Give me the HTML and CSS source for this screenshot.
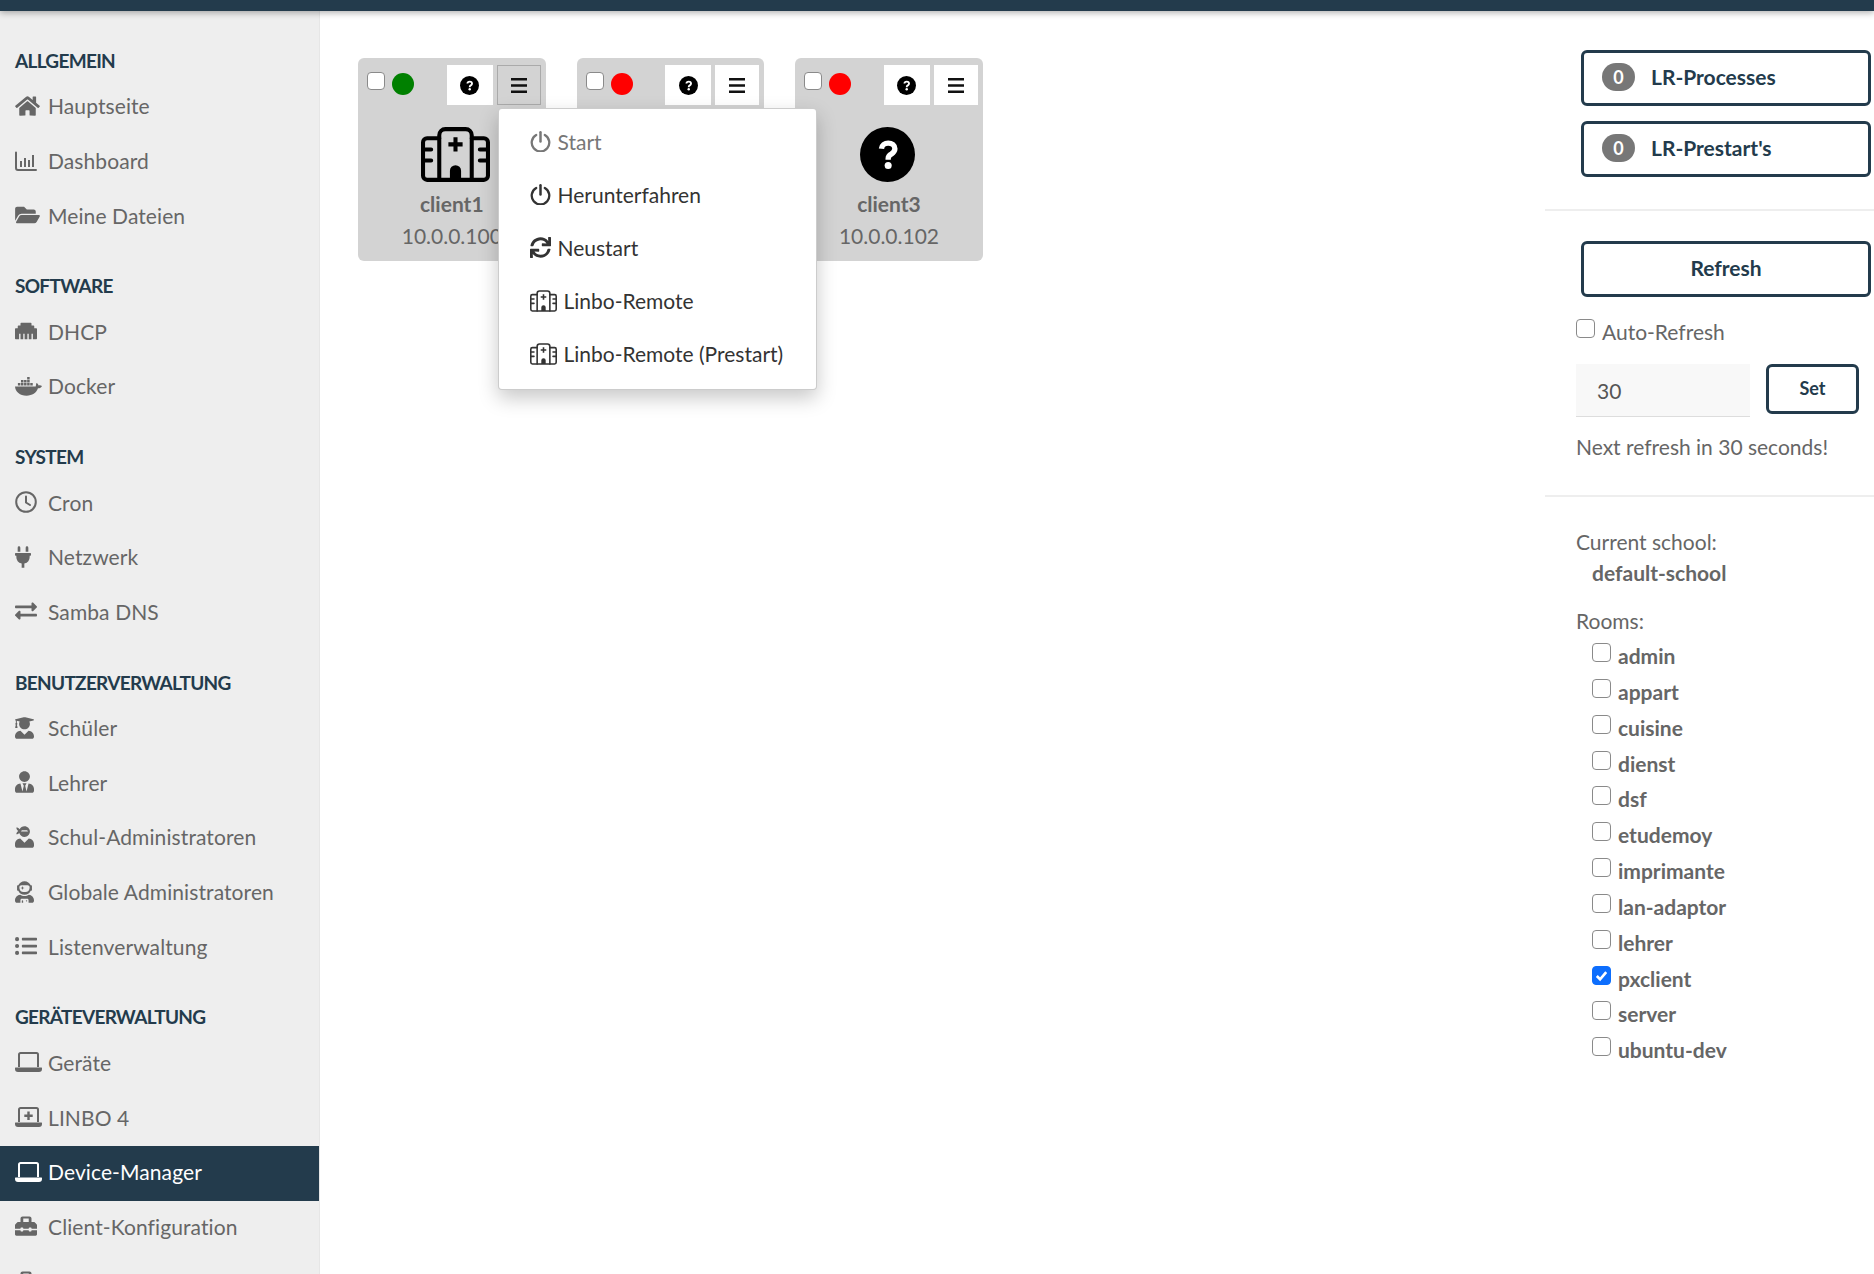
FILE: index.html
```html
<!DOCTYPE html>
<html lang="de">

<head>
    <meta charset="UTF-8">
    <meta name="viewport" content="width=device-width, initial-scale=1.0">
    <title>Device-Manager</title>
    <link rel="stylesheet" href="styles.css">
</head>

<body>
    <!-- icon sprite -->
    <svg class="sprite" xmlns="http://www.w3.org/2000/svg">
        <symbol id="i-home" viewBox="0 0 576 512"><path d="M280.37 148.26L96 300.11V464a16 16 0 0 0 16 16l112.06-.29a16 16 0 0 0 15.92-16V368a16 16 0 0 1 16-16h64a16 16 0 0 1 16 16v95.64a16 16 0 0 0 16 16.05L464 480a16 16 0 0 0 16-16V300L295.67 148.26a12.19 12.19 0 0 0-15.3 0zM571.6 251.47L488 182.56V44.05a12 12 0 0 0-12-12h-56a12 12 0 0 0-12 12v72.61L318.47 43a48 48 0 0 0-61 0L4.34 251.47a12 12 0 0 0-1.6 16.9l25.5 31A12 12 0 0 0 45.15 301l235.22-193.74a12.19 12.19 0 0 1 15.3 0L530.9 301a12 12 0 0 0 16.9-1.6l25.5-31a12 12 0 0 0-1.7-16.93z"/></symbol>
        <symbol id="i-chart" viewBox="0 0 22 20"><path d="M0 1.5a1 1 0 0 1 2 0V17a1 1 0 0 0 1 1h18a1 1 0 0 1 0 2H3a3 3 0 0 1-3-3zM5 10h2v6H5zM9 7h2v9H9zM13 9h2v7h-2zM17 4h2v12h-2z"/></symbol>
        <symbol id="i-folder" viewBox="0 0 576 512"><path d="M572.694 292.093L500.27 416.248A63.997 63.997 0 0 1 444.989 448H45.025c-18.523 0-30.064-20.093-20.731-36.093l72.424-124.155A64 64 0 0 1 152 256h399.964c18.523 0 30.064 20.093 20.73 36.093zM152 224h328v-48c0-26.51-21.49-48-48-48H272l-64-64H48C21.49 64 0 85.49 0 112v278.046l69.077-118.418C86.214 242.25 117.989 224 152 224z"/></symbol>
        <symbol id="i-ethernet" viewBox="0 0 512 512"><path d="M496 192h-48v-48c0-8.8-7.2-16-16-16h-48V80c0-8.8-7.2-16-16-16H144c-8.8 0-16 7.2-16 16v48H80c-8.8 0-16 7.2-16 16v48H16c-8.8 0-16 7.2-16 16v224c0 8.8 7.2 16 16 16h80V320h32v128h64V320h32v128h64V320h32v128h64V320h32v128h80c8.8 0 16-7.2 16-16V208c0-8.8-7.2-16-16-16z"/></symbol>
        <symbol id="i-docker" viewBox="0 0 28 20"><path d="M0 10.5h21.5c.4-1.400.2-3 1-3.600 1 .5 1.700 1.500 1.900 2.500 1.200-.4 2.400-.2 3.600.5-.8 1.800-2.300 2.600-4.200 2.500C22 17.500 18 20 12 20 5 20 .4 16 0 10.500z"/><path d="M3 7h2.600v2.600H3zM6.200 7h2.600v2.600H6.200zM9.400 7H12v2.600H9.400zM12.600 7h2.600v2.600h-2.600zM15.800 7h2.600v2.600h-2.600zM6.200 3.800h2.600v2.600H6.200zM9.400 3.800H12v2.600H9.400zM12.600 3.800h2.600v2.600h-2.600zM12.600.6h2.600v2.600h-2.600z"/></symbol>
        <symbol id="i-clock" viewBox="0 0 22 22"><circle cx="11" cy="11" r="9.800" fill="none" stroke="currentColor" stroke-width="2"/><path d="M11 5.500V11.500l4 2.500" fill="none" stroke="currentColor" stroke-width="2" stroke-linecap="round"/></symbol>
        <symbol id="i-plug" viewBox="0 0 384 512"><path d="M320,32a32,32,0,0,0-64,0v96h64Zm48,128H16A16,16,0,0,0,0,176v32a16,16,0,0,0,16,16H32v32A160.07,160.07,0,0,0,160,412.8V512h64V412.8A160.07,160.07,0,0,0,352,256V224h16a16,16,0,0,0,16-16V176A16,16,0,0,0,368,160ZM128,32a32,32,0,0,0-64,0v96h64Z"/></symbol>
        <symbol id="i-exchange" viewBox="0 0 512 512"><path d="M0 168v-16c0-13.255 10.745-24 24-24h360V80c0-21.367 25.899-32.042 40.971-16.971l80 80c9.372 9.373 9.372 24.569 0 33.941l-80 80C409.956 271.982 384 261.456 384 240v-48H24c-13.255 0-24-10.745-24-24zm488 152H128v-48c0-21.314-25.862-32.08-40.971-16.971l-80 80c-9.372 9.373-9.372 24.569 0 33.941l80 80C102.057 463.997 128 453.437 128 432v-48h360c13.255 0 24-10.745 24-24v-16c0-13.255-10.745-24-24-24z"/></symbol>
        <symbol id="i-graduate" viewBox="0 0 448 512"><path d="M319.4 320.6L224 416l-95.4-95.4C57.1 323.7 0 382.2 0 454.4v9.6c0 26.5 21.5 48 48 48h352c26.5 0 48-21.5 48-48v-9.6c0-72.2-57.1-130.7-128.6-133.8zM13.6 79.8l6.4 1.5v58.4c-7 4.2-12 11.5-12 20.3 0 8.4 4.6 15.4 11.1 19.700L3.500 242c-1.700 6.900 2.100 14 7.600 14h41.800c5.500 0 9.300-7.100 7.600-14l-15.600-62.300C51.400 175.400 56 168.400 56 160c0-8.800-5-16.100-12-20.300V87.100l66 15.900c-8.600 17.200-14 36.400-14 57 0 70.700 57.300 128 128 128s128-57.300 128-128c0-20.600-5.300-39.800-14-57l96.300-23.200c18.200-4.400 18.200-27.100 0-31.500l-190.400-46c-13-3.100-26.700-3.100-39.700 0L13.600 48.200c-18.100 4.400-18.100 27.200 0 31.600z"/></symbol>
        <symbol id="i-tie" viewBox="0 0 448 512"><path d="M224 256c70.700 0 128-57.300 128-128S294.700 0 224 0 96 57.300 96 128s57.300 128 128 128zm95.800 32.600L272 480l-32-136 32-56h-96l32 56-32 136-47.800-191.400C56.900 292 0 350.300 0 422.400V464c0 26.500 21.500 48 48 48h352c26.500 0 48-21.500 48-48v-41.600c0-72.100-56.900-130.400-128.200-133.800z"/></symbol>
        <symbol id="i-ninja" viewBox="0 0 448 512"><path d="M325.400 289.200L224 390.600 122.600 289.200C54 295.300 0 352.200 0 422.400V464c0 26.500 21.500 48 48 48h352c26.500 0 48-21.500 48-48v-41.600c0-70.200-54-127.100-122.600-133.200zM32 192c27.300 0 51.800-11.500 69.200-29.700 15.100 53.900 64 93.700 122.800 93.700 70.700 0 128-57.300 128-128S294.700 0 224 0c-50.400 0-93.600 29.400-114.500 71.800C92.100 47.800 64 32 32 32c0 33.400 17.100 62.800 43.100 80-26 17.200-43.100 46.600-43.100 80zm144-96h96c17.700 0 32 14.300 32 32H144c0-17.700 14.300-32 32-32z"/></symbol>
        <symbol id="i-astronaut" viewBox="0 0 448 512"><path d="M64 224h13.500c24.700 56.500 80.900 96 146.500 96s121.800-39.500 146.500-96H384c8.800 0 16-7.200 16-16v-96c0-8.800-7.200-16-16-16h-13.500C345.800 39.500 289.600 0 224 0S102.200 39.500 77.500 96H64c-8.800 0-16 7.200-16 16v96c0 8.800 7.200 16 16 16zm40-88c0-22.100 21.500-40 48-40h144c26.500 0 48 17.900 48 40v24c0 53-43 96-96 96h-48c-53 0-96-43-96-96v-24zm72 72l12-36 36-12-36-12-12-36-12 36-36 12 36 12 12 36zm151.600 113.400C297.700 340.700 262.200 352 224 352s-73.700-11.300-103.600-30.600C52.900 328.500 0 385 0 454.400v9.600c0 26.500 21.500 48 48 48h80v-64c0-17.700 14.300-32 32-32h128c17.700 0 32 14.300 32 32v64h80c26.500 0 48-21.500 48-48v-9.600c0-69.400-52.900-125.900-120.400-133zM272 448c-8.800 0-16 7.200-16 16s7.200 16 16 16 16-7.200 16-16-7.200-16-16-16zm-96 0c-8.800 0-16 7.200-16 16v48h32v-48c0-8.800-7.200-16-16-16z"/></symbol>
        <symbol id="i-list" viewBox="0 0 512 512"><path d="M48 48a48 48 0 1 0 48 48 48 48 0 0 0-48-48zm0 160a48 48 0 1 0 48 48 48 48 0 0 0-48-48zm0 160a48 48 0 1 0 48 48 48 48 0 0 0-48-48zm448 16H176a16 16 0 0 0-16 16v32a16 16 0 0 0 16 16h320a16 16 0 0 0 16-16v-32a16 16 0 0 0-16-16zm0-320H176a16 16 0 0 0-16 16v32a16 16 0 0 0 16 16h320a16 16 0 0 0 16-16V80a16 16 0 0 0-16-16zm0 160H176a16 16 0 0 0-16 16v32a16 16 0 0 0 16 16h320a16 16 0 0 0 16-16v-32a16 16 0 0 0-16-16z"/></symbol>
        <symbol id="i-laptop" viewBox="0 0 27 20"><path d="M4 15V2.500A1.500 1.500 0 0 1 5.500 1h16A1.500 1.500 0 0 1 23 2.500V15" fill="none" stroke="currentColor" stroke-width="2"/><path d="M.5 15.500h26a.5.5 0 0 1 .5.500v1a3 3 0 0 1-3 3H3a3 3 0 0 1-3-3v-1a.5.5 0 0 1 .5-.500z"/></symbol>
        <symbol id="i-laptop-plus" viewBox="0 0 27 20"><path d="M4 15V2.500A1.500 1.500 0 0 1 5.500 1h16A1.500 1.500 0 0 1 23 2.500V15" fill="none" stroke="currentColor" stroke-width="2"/><path d="M.5 15.500h26a.5.5 0 0 1 .5.500v1a3 3 0 0 1-3 3H3a3 3 0 0 1-3-3v-1a.5.5 0 0 1 .5-.500zM12.300 4.500h2.400v3h3v2.400h-3v3h-2.400v-3h-3V7.500h3z"/></symbol>
        <symbol id="i-toolbox" viewBox="0 0 512 512"><path d="M502.630 214.630l-45.250-45.250c-6-6-14.140-9.370-22.630-9.370H384V80c0-26.510-21.490-48-48-48H176c-26.510 0-48 21.490-48 48v80H77.250c-8.490 0-16.620 3.370-22.630 9.370L9.370 214.630c-6 6-9.370 14.140-9.370 22.630V320h128v-16c0-8.840 7.160-16 16-16h32c8.840 0 16 7.160 16 16v16h128v-16c0-8.840 7.160-16 16-16h32c8.840 0 16 7.160 16 16v16h128v-82.750c0-8.480-3.370-16.620-9.370-22.620zM320 160H192V80h128v80zm64 208c0 8.840-7.160 16-16 16h-32c-8.840 0-16-7.160-16-16v-16H192v16c0 8.840-7.160 16-16 16h-32c-8.840 0-16-7.160-16-16v-16H0v96c0 17.670 14.330 32 32 32h448c17.670 0 32-14.330 32-32v-96H384v16z"/></symbol>
        <symbol id="i-question" viewBox="0 0 164 164"><circle cx="82" cy="82" r="82" fill="#000"/><path d="M64 65c1-11 10-17 20-17 11 0 20 7 20 17 0 8-5 12-11 16-6 3-9 7-9 14v3" fill="none" stroke="#fff" stroke-width="16"/><circle cx="84" cy="115" r="10.500" fill="#fff"/></symbol>
        <symbol id="i-bars" viewBox="0 0 16 15"><path d="M0 0h16v2.500H0zM0 6.200h16v2.500H0zM0 12.400h16v2.500H0z"/></symbol>
        <symbol id="i-power" viewBox="0 0 22 22"><path d="M6.500 4.200a9.200 9.200 0 1 0 9 0" fill="none" stroke="currentColor" stroke-width="2.400" stroke-linecap="round"/><path d="M11 1.300V11" fill="none" stroke="currentColor" stroke-width="2.600" stroke-linecap="round"/></symbol>
        <symbol id="i-sync" viewBox="0 0 512 512"><path d="M440.650 12.570l4 82.770A247.160 247.160 0 0 0 255.830 8C134.730 8 33.910 94.920 12.290 209.820A12 12 0 0 0 24.090 224h49.050a12 12 0 0 0 11.670-9.260 175.910 175.910 0 0 1 317-56.940l-101.460-4.860a12 12 0 0 0-12.570 12v47.410a12 12 0 0 0 12 12H500a12 12 0 0 0 12-12V12a12 12 0 0 0-12-12h-47.370a12 12 0 0 0-11.980 12.570zM255.830 432a175.610 175.610 0 0 1-146-77.800l101.800 4.870a12 12 0 0 0 12.570-12v-47.400a12 12 0 0 0-12-12H12a12 12 0 0 0-12 12V500a12 12 0 0 0 12 12h47.350a12 12 0 0 0 12-12.600l-4.150-82.570A247.170 247.170 0 0 0 255.830 504c121.110 0 221.930-86.920 243.550-201.820a12 12 0 0 0-11.800-14.180h-49.050a12 12 0 0 0-11.670 9.260A175.860 175.860 0 0 1 255.830 432z"/></symbol>
        <symbol id="i-hospital" viewBox="0 0 68 54"><g fill="none" stroke="currentColor" stroke-width="4" stroke-linejoin="round" stroke-linecap="round"><path d="M18 11H6a4 4 0 0 0-4 4v33a4 4 0 0 0 4 4h56a4 4 0 0 0 4-4V15a4 4 0 0 0-4-4H50"/><path d="M18 52V8a6 6 0 0 1 6-6h20a6 6 0 0 1 6 6v44"/><path d="M3 22h7M3 33h7M58 22h7M58 33h7"/></g><path d="M32 10h4v5h5v4h-5v5h-4v-5h-5v-4h5zM28.500 52V43a5.500 5.500 0 0 1 11 0v9z"/></symbol>
    </svg>

    <header class="topbar"></header>

    <div class="page">
        <nav class="sidebar">
            <h4 class="nav-title">Allgemein</h4>
            <a class="nav-item"><span class="nav-icon"><svg class="ico w24"><use href="#i-home"/></svg></span>Hauptseite</a>
            <a class="nav-item"><span class="nav-icon"><svg class="ico w22"><use href="#i-chart"/></svg></span>Dashboard</a>
            <a class="nav-item"><span class="nav-icon"><svg class="ico w24"><use href="#i-folder"/></svg></span>Meine Dateien</a>

            <h4 class="nav-title">Software</h4>
            <a class="nav-item"><span class="nav-icon"><svg class="ico w22"><use href="#i-ethernet"/></svg></span>DHCP</a>
            <a class="nav-item"><span class="nav-icon"><svg class="ico w27"><use href="#i-docker"/></svg></span>Docker</a>

            <h4 class="nav-title">System</h4>
            <a class="nav-item"><span class="nav-icon"><svg class="ico w22"><use href="#i-clock"/></svg></span>Cron</a>
            <a class="nav-item"><span class="nav-icon"><svg class="ico w16"><use href="#i-plug"/></svg></span>Netzwerk</a>
            <a class="nav-item"><span class="nav-icon"><svg class="ico w22"><use href="#i-exchange"/></svg></span>Samba DNS</a>

            <h4 class="nav-title">Benutzerverwaltung</h4>
            <a class="nav-item"><span class="nav-icon"><svg class="ico w19"><use href="#i-graduate"/></svg></span>Schüler</a>
            <a class="nav-item"><span class="nav-icon"><svg class="ico w19"><use href="#i-tie"/></svg></span>Lehrer</a>
            <a class="nav-item"><span class="nav-icon"><svg class="ico w19"><use href="#i-ninja"/></svg></span>Schul-Administratoren</a>
            <a class="nav-item"><span class="nav-icon"><svg class="ico w19"><use href="#i-astronaut"/></svg></span>Globale Administratoren</a>
            <a class="nav-item"><span class="nav-icon"><svg class="ico w22"><use href="#i-list"/></svg></span>Listenverwaltung</a>

            <h4 class="nav-title">Geräteverwaltung</h4>
            <a class="nav-item"><span class="nav-icon"><svg class="ico w27"><use href="#i-laptop"/></svg></span>Geräte</a>
            <a class="nav-item"><span class="nav-icon"><svg class="ico w27"><use href="#i-laptop-plus"/></svg></span>LINBO 4</a>
            <a class="nav-item active"><span class="nav-icon"><svg class="ico w27"><use href="#i-laptop"/></svg></span>Device-Manager</a>
            <a class="nav-item"><span class="nav-icon"><svg class="ico w22"><use href="#i-toolbox"/></svg></span>Client-Konfiguration</a>
            <a class="nav-item"><span class="nav-icon"><svg class="ico w22"><use href="#i-toolbox"/></svg></span>Linbo-Synchronisation</a>
        </nav>

        <main class="content">
            <div class="card">
                <div class="card-head">
                    <input type="checkbox" class="check">
                    <span class="dot green"></span>
                    <button class="tool tool-wide"><svg class="ico-q"><use href="#i-question"/></svg></button>
                    <button class="tool open"><svg class="ico-bars"><use href="#i-bars"/></svg></button>
                </div>
                <svg class="card-icon card-icon-hospital"><use href="#i-hospital"/></svg>
                <div class="card-name">client1</div>
                <div class="card-ip">10.0.0.100</div>

                <div class="menu">
                    <a class="menu-item disabled"><svg class="ico-power"><use href="#i-power"/></svg>Start</a>
                    <a class="menu-item"><svg class="ico-power"><use href="#i-power"/></svg>Herunterfahren</a>
                    <a class="menu-item"><svg class="ico-power"><use href="#i-sync"/></svg>Neustart</a>
                    <a class="menu-item"><svg class="ico-hosp"><use href="#i-hospital"/></svg>Linbo-Remote</a>
                    <a class="menu-item"><svg class="ico-hosp"><use href="#i-hospital"/></svg>Linbo-Remote (Prestart)</a>
                </div>
            </div>

            <div class="card">
                <div class="card-head">
                    <input type="checkbox" class="check">
                    <span class="dot red"></span>
                    <button class="tool tool-wide"><svg class="ico-q"><use href="#i-question"/></svg></button>
                    <button class="tool"><svg class="ico-bars"><use href="#i-bars"/></svg></button>
                </div>
                <svg class="card-icon"><use href="#i-question"/></svg>
                <div class="card-name">client2</div>
                <div class="card-ip">10.0.0.101</div>
            </div>

            <div class="card">
                <div class="card-head">
                    <input type="checkbox" class="check">
                    <span class="dot red"></span>
                    <button class="tool tool-wide"><svg class="ico-q"><use href="#i-question"/></svg></button>
                    <button class="tool"><svg class="ico-bars"><use href="#i-bars"/></svg></button>
                </div>
                <svg class="card-icon"><use href="#i-question"/></svg>
                <div class="card-name">client3</div>
                <div class="card-ip">10.0.0.102</div>
            </div>
        </main>

        <aside class="panel">
            <section class="panel-block block-status">
                <button class="btn btn-left"><span class="badge">0</span>LR-Processes</button>
                <button class="btn btn-left"><span class="badge">0</span>LR-Prestart's</button>
            </section>

            <section class="panel-block block-refresh">
                <button class="btn">Refresh</button>
                <label class="auto-refresh"><input type="checkbox" class="check">Auto-Refresh</label>
                <div class="refresh-row">
                    <input type="text" class="interval" value="30">
                    <button class="btn btn-small">Set</button>
                </div>
                <p class="next-refresh">Next refresh in 30 seconds!</p>
            </section>

            <section class="filters">
                <div class="filter-label">Current school:</div>
                <div class="school">default-school</div>
                <div class="filter-label rooms-label">Rooms:</div>
                <div class="rooms">
                    <label class="room"><input type="checkbox" class="check">admin</label>
                    <label class="room"><input type="checkbox" class="check">appart</label>
                    <label class="room"><input type="checkbox" class="check">cuisine</label>
                    <label class="room"><input type="checkbox" class="check">dienst</label>
                    <label class="room"><input type="checkbox" class="check">dsf</label>
                    <label class="room"><input type="checkbox" class="check">etudemoy</label>
                    <label class="room"><input type="checkbox" class="check">imprimante</label>
                    <label class="room"><input type="checkbox" class="check">lan-adaptor</label>
                    <label class="room"><input type="checkbox" class="check">lehrer</label>
                    <label class="room"><input type="checkbox" class="check" checked>pxclient</label>
                    <label class="room"><input type="checkbox" class="check">server</label>
                    <label class="room"><input type="checkbox" class="check">ubuntu-dev</label>
                </div>
            </section>
        </aside>
    </div>
</body>

</html>
```

FILE: styles.css
```css
* {
    box-sizing: border-box;
}

html,
body {
    margin: 0;
    height: 1274px;
    overflow: hidden;
}

body {
    display: flex;
    flex-direction: column;
    background: #fff;
    color: #666;
    font-family: "Lato", "Open Sans", sans-serif;
    font-size: 21px;
}

.sprite {
    display: none;
}

.topbar {
    flex: none;
    height: 11px;
    background: #233b4c;
    box-shadow: 0 2px 6px rgba(0, 0, 0, .3);
    position: relative;
    z-index: 2;
}

.page {
    flex: 1;
    display: flex;
    min-height: 0;
}

/* sidebar */
.sidebar {
    flex: none;
    width: 320px;
    padding-top: 7.6px;
    background: #eee;
    border-right: 1px solid #e6e6e6;
    overflow: hidden;
}

.nav-title {
    height: 38px;
    margin: 23.4px 0 0;
    padding-left: 15px;
    line-height: 38px;
    color: #233b4c;
    font-size: 19px;
    font-weight: 700;
    letter-spacing: -.7px;
    text-transform: uppercase;
}

.nav-item {
    display: flex;
    align-items: center;
    height: 54.7px;
    padding: 0 0 3px 15px;
    color: #666;
    letter-spacing: .1px;
    white-space: nowrap;
}

.nav-item.active {
    background: #233b4c;
    color: #fff;
}

.nav-icon {
    flex: none;
    display: flex;
    align-items: center;
    width: 33px;
}

.ico {
    display: block;
    height: 22px;
    fill: currentColor;
}

.w16 { width: 16px; }
.w19 { width: 19px; }
.w22 { width: 22px; }
.w24 { width: 25px; }
.w27 { width: 27px; }

/* device cards */
.content {
    flex: 1;
    display: flex;
    align-items: flex-start;
    gap: 31px;
    padding: 47px 0 0 38px;
}

.card {
    position: relative;
    flex: none;
    width: 187.6px;
    height: 203px;
    padding: 7px 5px 0 9px;
    background: #d3d3d3;
    border-radius: 6px;
    text-align: center;
}

.card-head {
    display: flex;
    align-items: flex-start;
    height: 62px;
}

.check {
    flex: none;
    width: 18px;
    height: 18px;
    margin: 7px 0 0;
    appearance: none;
    background: #fff;
    border: 1px solid #8a8a8a;
    border-radius: 4px;
}

.check:checked {
    background: #0d6efd url("data:image/svg+xml,%3Csvg xmlns='http://www.w3.org/2000/svg' viewBox='0 0 18 18'%3E%3Cpath d='M4 9.500l3.500 3.500L14 5.500' fill='none' stroke='%23fff' stroke-width='2.800'/%3E%3C/svg%3E") center / 100% no-repeat;
    border-color: #0d6efd;
}

.dot {
    flex: none;
    width: 22px;
    height: 22px;
    margin: 8px 0 0 7px;
    border-radius: 50%;
}

.dot.green { background: #008000; }
.dot.red { background: #f00; }

.tool {
    flex: none;
    display: flex;
    align-items: center;
    justify-content: center;
    width: 44px;
    height: 40px;
    margin-left: 4px;
    padding: 0;
    background: #fff;
    border: 1px solid #fff;
}

.tool-wide {
    width: 46px;
    margin-left: auto;
}

.tool.open {
    background: #d3d3d3;
    border-color: #aaa;
}

.ico-q {
    width: 19px;
    height: 19px;
}

.ico-bars {
    width: 16px;
    height: 15px;
    fill: #111;
}

.card-icon {
    display: block;
    width: 55px;
    height: 55px;
    margin: 0 auto;
    position: relative;
    left: -3px;
    color: #000;
    fill: #000;
}

.card-icon-hospital {
    width: 69px;
    left: 1.5px;
}

.card-name {
    margin-top: 6px;
    height: 32px;
    line-height: 31px;
    font-weight: 700;
    position: relative;
    left: -2px;
}

.card-ip {
    height: 32px;
    line-height: 32px;
    position: relative;
    left: -2px;
}

/* dropdown */
.menu {
    position: absolute;
    z-index: 3;
    top: 50px;
    left: 139.5px;
    width: 319px;
    height: 282px;
    padding: 6px 0 0 31px;
    background: #fff;
    border: 1px solid rgba(0, 0, 0, .2);
    border-radius: 4px;
    box-shadow: 0 8px 20px rgba(0, 0, 0, .22);
    text-align: left;
}

.menu-item {
    display: flex;
    align-items: center;
    height: 53px;
    color: #333;
    white-space: nowrap;
}

.menu-item.disabled {
    color: #777;
}

.ico-power {
    flex: none;
    width: 21px;
    height: 21px;
    margin-right: 7px;
    fill: currentColor;
}

.ico-hosp {
    flex: none;
    width: 27px;
    height: 22px;
    margin-right: 7px;
    fill: currentColor;
}

/* right panel */
.panel {
    flex: none;
    width: 329px;
}

.panel-block {
    border-bottom: 2px solid #eee;
}

.block-status {
    height: 200px;
    padding: 39px 3px 0 36px;
}

.block-refresh {
    height: 286px;
    padding: 30px 3px 0 31px;
}

.btn {
    display: block;
    width: 100%;
    height: 56px;
    padding: 0 0 3px;
    background: #fff;
    border: 3px solid #233b4c;
    border-radius: 6px;
    color: #233b4c;
    font: 700 21px "Lato", sans-serif;
}

.block-refresh > .btn {
    width: 290px;
    margin-left: 5px;
}

.btn-left {
    display: flex;
    align-items: center;
    padding-left: 18px;
    margin-bottom: 15px;
}

.badge {
    width: 33px;
    height: 28px;
    margin-right: 16px;
    background: #777;
    border-radius: 14px;
    color: #fff;
    font-size: 18px;
    line-height: 28px;
    text-align: center;
}

.auto-refresh {
    display: flex;
    align-items: flex-start;
    height: 36px;
    margin-top: 19px;
    line-height: 32px;
}

.auto-refresh .check {
    width: 19px;
    height: 19px;
    margin: 3px 7px 0 0;
}

.refresh-row {
    display: flex;
    align-items: flex-start;
    gap: 16px;
    margin-top: 12px;
}

.interval {
    width: 174px;
    height: 53px;
    padding: 0 0 0 21px;
    background: #f8f8f8;
    border: none;
    border-bottom: 1px solid #ddd;
    color: #555;
    font: 21px "Lato", sans-serif;
}

.btn-small {
    width: 93px;
    height: 50px;
    font-size: 18px;
}

.next-refresh {
    margin: 14px 0 0;
    line-height: 32px;
}

.filters {
    padding: 29px 0 0 31px;
}

.filter-label {
    height: 32px;
    line-height: 32px;
}

.school {
    height: 32px;
    margin-top: -1px;
    padding-left: 16px;
    line-height: 32px;
    font-weight: 700;
}

.rooms-label {
    margin-top: 16px;
}

.rooms {
    padding-top: 1px;
}

.room {
    display: flex;
    align-items: flex-start;
    height: 35.85px;
    padding: 2px 0 0 16px;
    line-height: 32px;
    font-weight: 700;
}

.room .check {
    width: 19px;
    height: 19px;
    margin: 3px 7px 0 0;
}
```
